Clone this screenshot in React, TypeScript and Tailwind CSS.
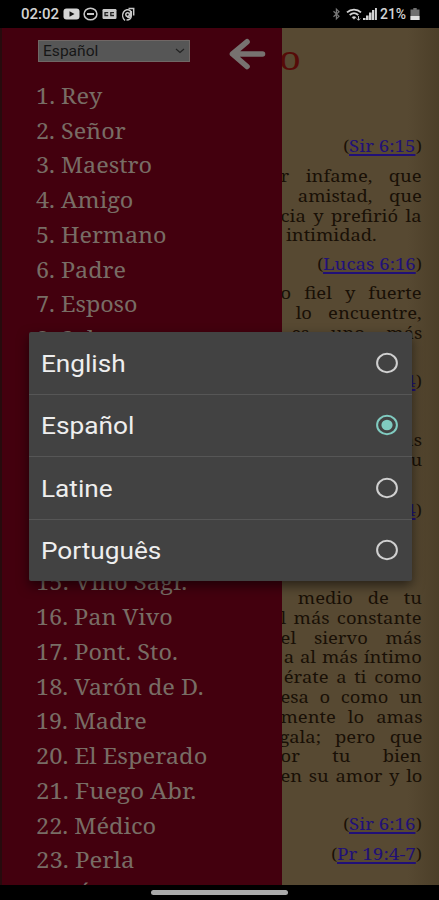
import { useLayoutEffect, useRef, useState } from "react";

/** Text stretched horizontally to occupy an exact width. */
function Fit({ text, width, className = "" }: { text: string; width: number; className?: string }) {
  const ref = useRef<HTMLSpanElement>(null);
  const [scale, setScale] = useState(1);
  useLayoutEffect(() => {
    if (ref.current) setScale(width / ref.current.offsetWidth);
  }, [text, width]);
  return (
    <span className="block shrink-0" style={{ width }}>
      <span
        ref={ref}
        className={`inline-block origin-left whitespace-nowrap ${className}`}
        style={{ transform: `scaleX(${scale})` }}
      >
        {text}
      </span>
    </span>
  );
}

const menu: [string, number][] = [
  ["1. Rey", 66],
  ["2. Señor", 90],
  ["3. Maestro", 116],
  ["4. Amigo", 97],
  ["5. Hermano", 131],
  ["6. Padre", 90],
  ["7. Esposo", 102],
  ["8. Salv.", 76],
  ["9. Pastor", 98],
  ["10. Cordero", 130],
  ["11. Camino", 126],
  ["12. Verdad", 124],
  ["13. Vida", 98],
  ["14. Luz", 88],
  ["15. Vino Sagr.", 151],
  ["16. Pan Vivo", 137],
  ["17. Pont. Sto.", 142],
  ["18. Varón de D.", 168],
  ["19. Madre", 111],
  ["20. El Esperado", 171],
  ["21. Fuego Abr.", 160],
  ["22. Médico", 120],
  ["23. Perla", 98],
  ["24. Único", 106],
];

const STRETCH = 1.08;

function Line({ text, width, left = false }: { text: string; width: number; left?: boolean }) {
  return (
    <div
      className={`flex h-[19.8px] origin-right scale-x-[1.08] items-center self-end leading-none ${left ? "justify-start" : "justify-between"}`}
      style={{ width: width / STRETCH }}
    >
      {text.split(" ").map((w, i) => (
        <span key={i}>{w}</span>
      ))}
    </div>
  );
}

function Verse({ text, width }: { text: string; width: number }) {
  return (
    <div className="flex h-5 items-center justify-end leading-none">
      <span>(</span>
      <Fit text={text} width={width} className="text-[#211078] underline decoration-[1.5px] underline-offset-2" />
      <span>)</span>
    </div>
  );
}

function StatusBar() {
  return (
    <header className="flex h-7 shrink-0 items-center bg-black pl-[21px] pr-[19px] font-[Roboto,sans-serif] text-[15px] font-medium leading-none text-[#d4d4d4]">
      <Fit text="02:02" width={38} />
      <svg className="ml-1 h-3.5 w-[17px]" viewBox="0 0 17 14">
        <rect x="0.5" y="1.5" width="16" height="11" rx="3" fill="#d4d4d4" />
        <path d="M6.5 4.3v5.4l5-2.7z" fill="#111" />
      </svg>
      <svg className="ml-[3px] h-3.5 w-[15px]" viewBox="0 0 15 14" fill="none" stroke="#c8c8c8" strokeWidth="1.5">
        <ellipse cx="7.5" cy="7" rx="6.4" ry="5.8" />
        <path d="M4 7h7" strokeWidth="2" />
      </svg>
      <svg className="ml-1 h-3.5 w-[15px]" viewBox="0 0 15 14">
        <rect x="0.5" y="2" width="14" height="10" rx="1.2" fill="#c8c8c8" />
        <path d="M6.2 5.7H3v2.8h3.2M12 5.7H8.8v2.8H12" fill="none" stroke="#222" strokeWidth="1.3" />
      </svg>
      <svg className="ml-1 h-[15px] w-[15px]" viewBox="0 0 15 15" fill="none" stroke="#c8c8c8" strokeWidth="1.5">
        <path d="M4 13.5C1.6 11.5 1 8 2.5 5.2 4 2.4 7.5 2 9.5 4v4.5c0 2-2 2.7-3 1.4" />
        <circle cx="6.6" cy="7.6" r="1.8" />
        <path d="M7.5 1.5H12.7v7M5.5 13c3 0 4.6-1.5 4.8-4V4" />
      </svg>
      <div className="grow" />
      <svg className="h-3.5 w-[9px]" viewBox="0 0 9 14" fill="none" stroke="#777777" strokeWidth="1.2">
        <path d="M1.5 4.2l5.5 5-2.6 2.6V2.2L7 4.8l-5.5 5" />
      </svg>
      <svg className="ml-[5px] h-3.5 w-4" viewBox="0 0 16 14" fill="none" stroke="#d4d4d4">
        <path d="M1 5.3C5 1.6 11 1.6 15 5.3" strokeWidth="1.8" />
        <path d="M3.7 8C6.3 5.7 9.7 5.7 12.3 8" strokeWidth="1.7" />
        <path d="M6 10.3c1.2-1 2.8-1 4 0l-2 2z" fill="#d4d4d4" strokeWidth=".5" />
        <path d="M12.5 9v4M10.8 11.5l1.7 1.8 1.7-1.8" strokeWidth=".9" />
      </svg>
      <svg className="ml-px h-3.5 w-[14px]" viewBox="0 0 14 14" fill="#d4d4d4">
        <path d="M0 13h2.6v-2H0zM3 13h2.6V8.5H3zM6 13h2.6V5.5H6zM9 13h2.3V3H9zM12 13h1.9V1H12z" />
      </svg>
      <div className="w-[3px]" />
      <Fit text="21%" width={26} />
      <svg className="ml-[4px] h-3.5 w-[10px]" viewBox="0 0 10 14">
        <path d="M3.3 1h3.4v1.5h2.8v10.5h-9V2.5h2.8z" fill="#707070" />
        <path d="M.5 9h9v4h-9z" fill="#e0e0e0" />
      </svg>
    </header>
  );
}

function Drawer() {
  return (
    <aside className="flex w-[282px] shrink-0 flex-col overflow-hidden border-l-2 border-[#260b0d] bg-[#43000e]">
      <div className="flex h-[45px] shrink-0 items-start pl-[36px] pt-[9px]">
        <div className="mt-[3px] flex h-[22px] w-[152px] items-center justify-between border border-[#706765] bg-[#565656] pl-1 pr-1 font-[Roboto,sans-serif] text-[15px] leading-none text-[#161616]">
          <Fit text="Español" width={55} />
          <svg className="h-1.5 w-2.5" viewBox="0 0 10 6" fill="none" stroke="#202020" strokeWidth="1.1">
            <path d="M1 1l4 3.5L9 1" />
          </svg>
        </div>
        <svg className="ml-[38px] h-[34px] w-[38px]" viewBox="0 0 38 34" fill="none" stroke="#777270" strokeWidth="5.6" strokeLinecap="round" strokeLinejoin="round">
          <path d="M19 4.8L4.5 17L19 29.5M5 17h29.5" />
        </svg>
      </div>
      <nav className="flex flex-col pl-[34px] font-['Noto_Serif','DejaVu_Serif',serif] text-[21px] leading-none text-[#786d65]">
        {menu.map(([t, w]) => (
          <div key={t} className="flex h-[34.75px] shrink-0 items-end pb-px">
            <Fit text={t} width={w} />
          </div>
        ))}
      </nav>
    </aside>
  );
}

function Reading() {
  return (
    <main className="flex min-w-0 grow flex-col overflow-hidden bg-[#574932] bg-[linear-gradient(90deg,transparent_80%,#40341f80)] pr-[17px] font-['Noto_Serif','DejaVu_Serif',serif] text-[17px] text-[#191006]">
      <div className="-ml-[3px] flex h-[58px] items-center text-[33px] leading-none text-[#560b08]">
        <Fit text="o" width={22} />
      </div>
      <div className="mt-[49px]">
        <Verse text="Sir 6:15" width={67} />
      </div>
      <div className="mt-[10.6px] flex flex-col">
        <Line text="r infame, que" width={141} />
        <Line text="amistad, que" width={124} />
        <Line text="cia y prefirió la" width={141} />
        <Line text="intimidad." width={136} left />
      </div>
      <div className="mt-[8.4px]">
        <Verse text="Lucas 6:16" width={93} />
      </div>
      <div className="mt-[9.6px] flex flex-col">
        <Line text="o fiel y fuerte" width={141} />
        <Line text="lo encuentre," width={126} />
        <Line text="es uno más" width={131} />
        <Line text="tesoro." width={141} left />
      </div>
      <div className="mt-[9px]">
        <Verse text="Sir 6:14" width={67} />
      </div>
      <div className="mt-[39px] flex flex-col">
        <Line text="es más" width={120} />
        <Line text="que tu" width={120} />
      </div>
      <div className="mt-[30px]">
        <Verse text="Pr 18:24" width={72} />
      </div>
      <div className="mt-[68px] flex flex-col">
        <Line text="medio de tu" width={124} />
        <Line text="l más constante" width={141} />
        <Line text="el siervo más" width={141} />
        <Line text="a al más íntimo" width={138} />
        <Line text="érate a ti como" width={138} />
        <Line text="esa o como un" width={142} />
        <Line text="mente lo amas" width={142} />
        <Line text="gala; pero que" width={143} />
        <Line text="or tu bien" width={141} />
        <Line text="en su amor y lo" width={142} />
      </div>
      <div className="mt-[28.4px]">
        <Verse text="Sir 6:16" width={67} />
      </div>
      <div className="mt-2.5">
        <Verse text="Pr 19:4-7" width={79} />
      </div>
    </main>
  );
}

const languages: [string, number][] = [
  ["English", 85],
  ["Español", 93],
  ["Latine", 72],
  ["Português", 120],
];

function LanguageDialog() {
  return (
    <div className="absolute left-[29px] top-[332px] flex h-[249px] w-[383px] flex-col rounded-[2px] bg-[#424242] shadow-[0_5px_12px_#0008]">
      {languages.map(([name, w], i) => (
        <div
          key={name}
          className={`flex flex-1 items-center justify-between pl-3 pr-[13px] font-[Roboto,sans-serif] text-2xl leading-none text-[#eeeeee] ${i ? "border-t border-[#565656]" : ""}`}
        >
          <div className="pt-0.5">
            <Fit text={name} width={w} />
          </div>
          <svg className="h-[22px] w-6" viewBox="0 0 24 22" fill="none" stroke={i === 1 ? "#80cbc0" : "#d0d0d0"} strokeWidth="2">
            <ellipse cx="12" cy="11" rx="9.9" ry="9.3" />
            {i === 1 && <ellipse cx="12" cy="11" rx="5.6" ry="5.2" fill="#80cbc0" stroke="none" />}
          </svg>
        </div>
      ))}
    </div>
  );
}

export default function App() {
  return (
    <div className="relative flex h-[900px] w-[439px] flex-col overflow-hidden bg-black">
      <StatusBar />
      <div className="flex h-[857px] min-h-0 shrink-0">
        <Drawer />
        <Reading />
      </div>
      <footer className="flex h-[15px] justify-center pt-[5px]">
        <div className="h-[5px] w-[137px] rounded-full bg-[#aaaaaa]" />
      </footer>
      <LanguageDialog />
    </div>
  );
}
